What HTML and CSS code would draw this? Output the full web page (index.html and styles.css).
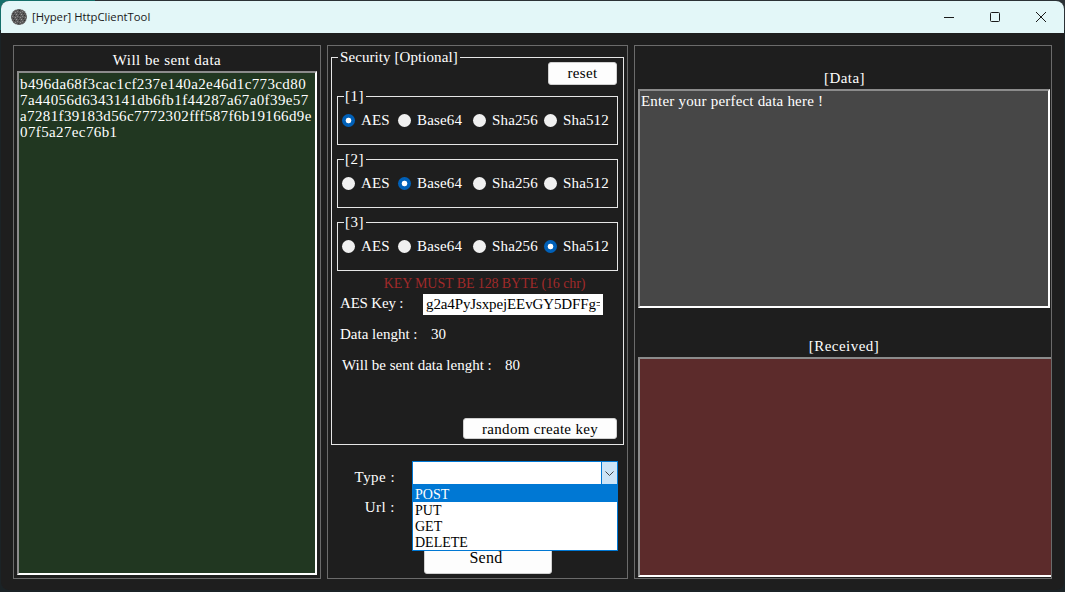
FILE: index.html
```html
<!DOCTYPE html>
<html>
<head>
    <title>[Hyper] HttpClientTool</title>
    <link rel="stylesheet" href="styles.css">
</head>
<body>
    <div class="window">
        <div class="titlebar">
            <svg class="app-icon" width="16" height="16" viewBox="0 0 16 16">
                <defs>
                    <pattern id="grain" width="5" height="5" patternUnits="userSpaceOnUse">
                        <rect width="5" height="5" fill="#5a5a5a"/>
                        <rect width="1" height="1" fill="#9a9a9a"/>
                        <rect x="3" y="1" width="1" height="1" fill="#2f2f2f"/>
                        <rect x="1" y="2" width="1" height="1" fill="#858585"/>
                        <rect x="4" y="3" width="1" height="1" fill="#8f8f8f"/>
                        <rect x="2" y="4" width="1" height="1" fill="#383838"/>
                    </pattern>
                </defs>
                <circle cx="8" cy="8" r="8" fill="url(#grain)"/>
            </svg>
            <span class="app-title">[Hyper] HttpClientTool</span>
            <div class="win-btn">
                <svg width="12" height="12" viewBox="0 0 12 12"><path d="M1 6.5h10" stroke="#1a1a1a" fill="none"/></svg>
            </div>
            <div class="win-btn">
                <svg width="12" height="12" viewBox="0 0 12 12"><rect x="1.5" y="1.5" width="9" height="9" rx="1" stroke="#1a1a1a" fill="none"/></svg>
            </div>
            <div class="win-btn">
                <svg width="12" height="12" viewBox="0 0 12 12"><path d="M1 1l10 10M11 1L1 11" stroke="#1a1a1a" fill="none"/></svg>
            </div>
        </div>

        <div class="content">
            <div class="panel panel-left">
                <div class="caption">Will be sent data</div>
                <div class="box box-sent">b496da68f3cac1cf237e140a2e46d1c773cd80<br>7a44056d6343141db6fb1f44287a67a0f39e57<br>a7281f39183d56c7772302fff587f6b19166d9e<br>07f5a27ec76b1</div>
            </div>

            <div class="panel panel-middle">
                <fieldset class="security">
                    <legend>Security [Optional]</legend>
                    <button type="button" class="btn btn-reset">reset</button>

                    <fieldset class="group">
                        <legend>[1]</legend>
                        <div class="radios">
                            <label><input type="radio" name="g1" checked>AES</label>
                            <label><input type="radio" name="g1">Base64</label>
                            <label><input type="radio" name="g1">Sha256</label>
                            <label><input type="radio" name="g1">Sha512</label>
                        </div>
                    </fieldset>

                    <fieldset class="group">
                        <legend>[2]</legend>
                        <div class="radios">
                            <label><input type="radio" name="g2">AES</label>
                            <label><input type="radio" name="g2" checked>Base64</label>
                            <label><input type="radio" name="g2">Sha256</label>
                            <label><input type="radio" name="g2">Sha512</label>
                        </div>
                    </fieldset>

                    <fieldset class="group">
                        <legend>[3]</legend>
                        <div class="radios">
                            <label><input type="radio" name="g3">AES</label>
                            <label><input type="radio" name="g3">Base64</label>
                            <label><input type="radio" name="g3">Sha256</label>
                            <label><input type="radio" name="g3" checked>Sha512</label>
                        </div>
                    </fieldset>

                    <div class="key-warning">KEY MUST BE 128 BYTE (16 chr)</div>

                    <div class="key-row">
                        <span class="key-label">AES Key :</span>
                        <input type="text" class="key-input" value="g2a4PyJsxpejEEvGY5DFFg==">
                    </div>
                    <div class="info-row info-data"><span class="info-label">Data lenght :</span><span>30</span></div>
                    <div class="info-row info-sent"><span class="info-label">Will be sent data lenght :</span><span>80</span></div>

                    <button type="button" class="btn btn-random">random create key</button>
                </fieldset>

                <div class="request">
                    <span class="req-label req-type">Type :</span>
                    <div class="combo">
                        <div class="combo-arrow">
                            <svg width="9" height="5" viewBox="0 0 9 5"><path d="M.5.5l4 4 4-4" stroke="#444" fill="none"/></svg>
                        </div>
                        <ul class="combo-list">
                            <li class="selected">POST</li>
                            <li>PUT</li>
                            <li>GET</li>
                            <li>DELETE</li>
                        </ul>
                    </div>
                    <span class="req-label req-url">Url :</span>
                    <input type="text" class="url-input">
                    <button type="button" class="btn btn-send">Send</button>
                </div>
            </div>

            <div class="panel panel-right">
                <div class="caption">[Data]</div>
                <div class="box box-data">Enter your perfect data here !</div>
                <div class="caption caption-received">[Received]</div>
                <div class="box box-received"></div>
            </div>
        </div>
    </div>
</body>
</html>
```

FILE: styles.css
```css
html, body {
    margin: 0;
    height: 100%;
    overflow: hidden;
}

body {
    background: linear-gradient(90deg, #14706b 0, #14706b 95px, #2b3236 95px) top / 100% 30px no-repeat, #1b2326;
    padding: 1px;
    box-sizing: border-box;
    font-family: "Liberation Serif", serif;
    font-size: 15px;
    letter-spacing: .45px;
    line-height: 16px;
    color: #fff;
}

.window {
    width: 1063px;
    height: 589px;
    background-color: #1e1e1e;
    border-radius: 8px;
    overflow: hidden;
}

/* Barra de titulo */
.titlebar {
    display: flex;
    align-items: center;
    height: 32px;
    padding-left: 10px;
    background-color: #e3f7f8;
    color: #1a1a1a;
}

.app-icon {
    margin-right: 5px;
}

.app-title {
    flex: 1;
    font-family: "Open Sans", sans-serif;
    font-size: 11.3px;
    letter-spacing: 0;
}

.win-btn {
    display: flex;
    justify-content: center;
    align-items: center;
    width: 46px;
    height: 32px;
}

/* Paineis */
.content {
    display: flex;
    gap: 6px;
    padding: 12px 0 0 12px;
}

.panel {
    box-sizing: border-box;
    height: 534px;
    border: 1px solid #6b6b6b;
    overflow: hidden;
}

.panel-left {
    width: 308px;
    padding: 6px 3px 0;
}

.panel-middle {
    width: 301px;
    padding: 3px 3px 0;
}

.panel-right {
    width: 418px;
    padding: 24px 0 0 3px;
}

.caption {
    height: 16px;
    text-align: center;
}

.box {
    box-sizing: border-box;
    border: 2px solid;
    border-color: #8c8c8c #fff #fff #8c8c8c;
    padding: 2px 1px;
}

.box-sent {
    height: 504px;
    margin-top: 3px;
    padding-top: 3px;
    background-color: #213721;
    letter-spacing: .38px;
}

.box-data {
    width: 412px;
    height: 219px;
    margin-top: 3px;
    background-color: #474747;
    letter-spacing: .2px;
}

.caption-received {
    width: 412px;
    margin-top: 30px;
}

.box-received {
    width: 416px;
    height: 220px;
    margin-top: 3px;
    background-color: #5c2b2b;
}

/* Security */
fieldset {
    box-sizing: border-box;
    margin: 0;
    min-width: 0;
    border: 1px solid #e6e6e6;
}

legend {
    padding: 0 2px;
    margin-left: 1px;
    line-height: 16px;
    letter-spacing: .08px;
}

.security {
    display: flex;
    flex-direction: column;
    width: 293px;
    height: 396px;
    padding: 0 5px 5px;
}

.group {
    width: 281px;
    height: 57px;
    margin-top: 6px;
    padding: 0 0 0 4px;
}

.group legend {
    letter-spacing: .45px;
    margin-left: 2px;
    margin-top: 1px;
    padding: 0 2px 0 1px;
}

.btn-reset + .group {
    margin-top: 3px;
}

.btn {
    display: block;
    padding: 0;
    border: 1px solid #d0d0d0;
    border-radius: 3px;
    background-color: #fdfdfd;
    color: #000;
    font: inherit;
    letter-spacing: .3px;
}

.btn-reset {
    align-self: flex-end;
    width: 69px;
    height: 23px;
    margin: -3px 1px 0 0;
    padding-bottom: 2px;
}

.btn-random {
    align-self: flex-end;
    width: 154px;
    height: 21px;
    margin: 45px 1px 0 0;
}

.radios {
    display: grid;
    grid-template-columns: 56px 75px 71px 1fr;
    margin-top: 8px;
    letter-spacing: .15px;
}

.radios label {
    display: flex;
    align-items: center;
    gap: 6px;
}

.radios input {
    flex-shrink: 0;
    appearance: none;
    width: 13px;
    height: 13px;
    margin: 0;
    border-radius: 50%;
    background-color: #f0f0f0;
}

.radios input:checked {
    background: radial-gradient(circle, #fff 0, #fff 2.5px, #0060b8 3.2px);
}

.key-warning {
    margin-top: 5px;
    padding-left: 14px;
    text-align: center;
    color: #a02a2a;
    font-size: 14px;
    letter-spacing: -.1px;
}

.key-row {
    display: flex;
    padding-left: 3px;
    margin-top: 2px;
    letter-spacing: -.2px;
}

.key-label {
    width: 83px;
    padding-top: 1px;
}

.key-input {
    box-sizing: border-box;
    width: 180px;
    height: 21px;
    padding: 1px 3px;
    border: 0;
    background-color: #fff;
    color: #000;
    font: inherit;
    letter-spacing: -.12px;
}

.info-row {
    display: flex;
    letter-spacing: 0;
}

.info-data {
    margin-top: 11px;
    padding-left: 3px;
}

.info-data .info-label {
    width: 91px;
}

.info-sent {
    margin-top: 15px;
    padding-left: 5px;
}

.info-sent .info-label {
    width: 163px;
}

/* Tipo, url e envio */
.request {
    display: grid;
    grid-template-columns: 64px 206px;
    column-gap: 17px;
    margin-top: 16px;
}

.req-label {
    text-align: right;
}

.req-type {
    padding-top: 8px;
}

.req-url {
    margin-top: 12px;
    padding-top: 2px;
}

.combo {
    position: relative;
    box-sizing: border-box;
    height: 24px;
    border: 1px solid #0078d4;
    background-color: #fff;
}

.combo-arrow {
    position: absolute;
    top: -1px;
    right: -1px;
    display: flex;
    justify-content: center;
    align-items: center;
    box-sizing: border-box;
    width: 17px;
    height: 24px;
    border: 1px solid #0078d4;
    background-color: #cce4f7;
}

.combo-list {
    position: absolute;
    z-index: 10;
    top: 22px;
    left: -1px;
    width: 204px;
    margin: 0;
    padding: 0;
    list-style: none;
    border: 1px solid #0078d4;
    background-color: #fff;
    color: #000;
    font-size: 14px;
    letter-spacing: 0;
}

.combo-list li {
    height: 16px;
    padding-left: 2px;
    line-height: 18px;
}

.combo-list .selected {
    height: 17px;
    line-height: 20px;
    background-color: #0078d4;
    color: #fff;
}

.url-input {
    box-sizing: border-box;
    width: 205px;
    height: 21px;
    margin-top: 12px;
    border: 0;
}

.btn-send {
    grid-column: 2;
    width: 128px;
    height: 31px;
    margin: 25px 0 0 12px;
    padding: 0 4px 1px 0;
    font-size: 16px;
}
```
